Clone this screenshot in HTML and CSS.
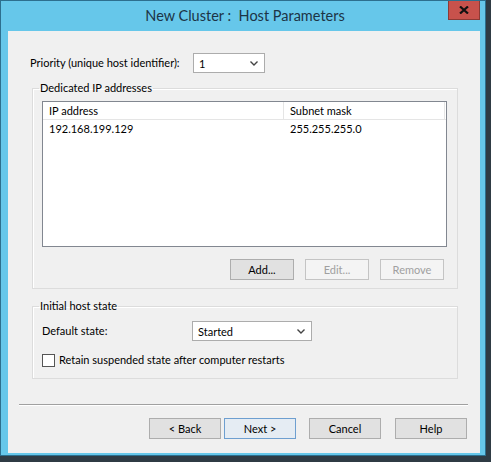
FILE: index.html
```html
<!DOCTYPE html>
<html>
<head>
<title>New Cluster : Host Parameters</title>
<link rel="stylesheet" href="styles.css">
</head>
<body>
<div class="frame">
  <div class="titlebar">
    <span></span>
    <span class="title">New Cluster :&nbsp; Host Parameters</span>
    <span class="close"><svg width="10" height="8" viewBox="0 0 10 8"><path d="M1 0.5 L9 7.5 M9 0.5 L1 7.5" stroke="#111" stroke-width="2.2"/></svg></span>
  </div>

  <div class="client">
    <div class="row priority">
      <label class="lbl w-prio">Priority (unique host identifier):</label>
      <div class="combo w72"><span>1</span><svg class="arrow" width="8" height="5" viewBox="0 0 8 5"><path d="M0.5 0.5 L4 4 L7.5 0.5" fill="none" stroke="#444" stroke-width="1.4"/></svg></div>
    </div>

    <fieldset class="group ips">
      <legend>Dedicated IP addresses</legend>
      <div class="listview">
        <div class="lv-head">
          <div class="col c1">IP address</div>
          <div class="col c2">Subnet mask</div>
        </div>
        <div class="lv-row">
          <div class="col c1">192.168.199.129</div>
          <div class="col c2">255.255.255.0</div>
        </div>
      </div>
      <div class="btnrow">
        <button class="btn small">Add...</button>
        <button class="btn small" disabled>Edit...</button>
        <button class="btn small" disabled>Remove</button>
      </div>
    </fieldset>

    <fieldset class="group state">
      <legend>Initial host state</legend>
      <div class="row">
        <label class="lbl w-state">Default state:</label>
        <div class="combo w120"><span>Started</span><svg class="arrow" width="8" height="5" viewBox="0 0 8 5"><path d="M0.5 0.5 L4 4 L7.5 0.5" fill="none" stroke="#444" stroke-width="1.4"/></svg></div>
      </div>
      <div class="row check">
        <span class="box"></span>
        <label>Retain suspended state after computer restarts</label>
      </div>
    </fieldset>

    <div class="separator"></div>

    <div class="footer">
      <button class="btn wide">&lt; Back</button>
      <button class="btn wide default">Next &gt;</button>
      <button class="btn wide cancel">Cancel</button>
      <button class="btn wide">Help</button>
    </div>
  </div>
</div>
</body>
</html>
```

FILE: styles.css
```css
html, body { margin: 0; padding: 0; }
body { width: 491px; height: 462px; background: #2f3b44; overflow: hidden;
       font-family: Lato, "Liberation Sans", sans-serif; font-size: 11px; color: #000; }

.frame { width: 486px; height: 456px; box-sizing: border-box; border: 1px solid #2d6f8e;
         background: #66c7ea; padding: 0 5px 0 7px; }

.titlebar { height: 30px; display: grid; grid-template-columns: 1fr auto 1fr; align-items: start; }
.title { font-size: 14.5px; color: #1c3446; line-height: 30px; padding-left: 2px; white-space: nowrap; }
.close { justify-self: end; width: 32px; height: 19px; background: #c8524c; border: 1px solid #8c3a35; border-top: 0;
         box-sizing: border-box; display: flex; align-items: center; justify-content: center; }

.client { width: 472px; height: 422px; background: #f0f0f0; box-sizing: border-box; padding-top: 22px; }

.row { display: flex; align-items: center; }
.lbl, label { white-space: nowrap; line-height: 16px; }
.priority { margin-left: 22px; }
.lbl.w-prio { width: 163px; }
.lbl.w-state { width: 150px; }

.combo { height: 20px; box-sizing: border-box; background: #fff; border: 1px solid #acacac;
         display: flex; align-items: center; justify-content: space-between; padding: 0 6px 0 5px; }
.w72 { width: 72px; }
.w120 { width: 120px; }

.group { margin: 0 0 0 24px; width: 426px; box-sizing: border-box; border: 1px solid #dcdcdc;
         box-shadow: inset 1px 1px 0 #fff; padding: 0 10px 0 9px; min-width: 0; }
.group legend { margin-left: -3px; padding: 0 1px; line-height: 16px; }
.ips { margin-top: 7px; padding-bottom: 8px; }
.state { margin-top: 9px; padding-bottom: 10px; }

.listview { margin-top: 5px; width: 405px; height: 146px; box-sizing: border-box; background: #fff; border: 1px solid #828790; }
.lv-head, .lv-row { display: flex; }
.lv-head { height: 18px; border-bottom: 1px solid #e5e5e5; box-sizing: border-box; }
.lv-head .col { line-height: 17px; }
.lv-head .c1 { border-right: 1px solid #e5e5e5; }
.lv-head .c2 { border-right: 1px solid #e5e5e5; }
.lv-row { height: 17px; line-height: 17px; }
.col { box-sizing: border-box; padding-left: 6px; }
.c1 { width: 241px; }
.c2 { width: 161px; }

.btnrow { margin-top: 12px; display: flex; justify-content: flex-end; gap: 11px; padding-right: 3px; }

.btn { font: inherit; color: #000; height: 21px; box-sizing: border-box; background: #e1e1e1;
       border: 1px solid #adadad; padding: 0; margin: 0; }
.btn:disabled { background: #f4f4f4; border-color: #c4c4c4; color: #a0a0a0; }
.btn.small { width: 64px; }
.btn.wide { width: 72px; }
.btn.default { border-color: #6e9fd0; background: #e5ecf3; }

.state .row:first-of-type { margin-top: 7px; }
.check { margin-top: 11px; gap: 4px; }
.box { width: 13px; height: 13px; box-sizing: border-box; background: #fff; border: 1px solid #555; }

.separator { margin: 25px 0 0 11px; width: 449px; border-top: 1px solid #a0a0a0; border-bottom: 1px solid #fff; }

.footer { margin-top: 12px; display: flex; justify-content: flex-end; padding-right: 13px; gap: 3px; }
.footer .cancel { margin-left: 10px; margin-right: 11px; }
```
